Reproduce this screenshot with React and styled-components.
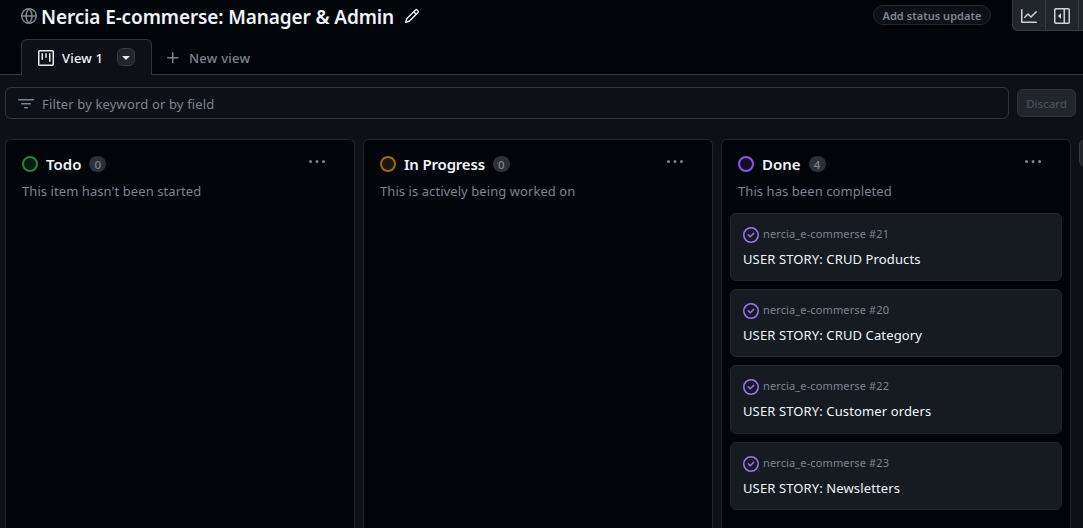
import React from "react";
import styled, { createGlobalStyle } from "styled-components";

const GlobalStyle = createGlobalStyle`
  * { box-sizing: border-box; }
  body {
    margin: 0;
    overflow: hidden;
    background: #0d1117;
    color: #f0f6fc;
    font-family: "Noto Sans", "Open Sans", sans-serif;
    font-size: 13px;
  }
  button { font-family: inherit; margin: 0; padding: 0; border: 0; background: none; color: inherit; }
  h1, h2, h3, p { margin: 0; }
`;

const paths = {
  globe:
    "M8 0a8 8 0 1 1 0 16A8 8 0 0 1 8 0ZM5.78 8.75a9.64 9.64 0 0 0 1.363 4.177c.255.426.542.832.857 1.215.245-.296.551-.705.857-1.215A9.64 9.64 0 0 0 10.22 8.75Zm4.44-1.5a9.64 9.64 0 0 0-1.363-4.177c-.307-.51-.612-.919-.857-1.215a9.927 9.927 0 0 0-.857 1.215A9.64 9.64 0 0 0 5.78 7.25Zm-5.944 1.5H1.543a6.507 6.507 0 0 0 4.666 5.5c-.123-.181-.24-.365-.352-.552-.715-1.192-1.437-2.874-1.581-4.948Zm-2.733-1.5h2.733c.144-2.074.866-3.756 1.58-4.948.12-.197.237-.381.353-.552a6.507 6.507 0 0 0-4.666 5.5Zm10.181 1.5c-.144 2.074-.866 3.756-1.58 4.948-.12.197-.237.381-.353.552a6.507 6.507 0 0 0 4.666-5.5Zm2.733-1.5a6.507 6.507 0 0 0-4.666-5.5c.123.181.24.365.353.552.714 1.192 1.436 2.874 1.58 4.948Z",
  pencil:
    "M11.013 1.427a1.75 1.75 0 0 1 2.474 0l1.086 1.086a1.75 1.75 0 0 1 0 2.474l-8.61 8.61c-.21.21-.47.364-.756.445l-3.251.93a.75.75 0 0 1-.927-.928l.929-3.25c.081-.286.235-.547.445-.758l8.61-8.61Zm.176 4.823L9.75 4.81l-6.286 6.287a.253.253 0 0 0-.064.108l-.558 1.953 1.953-.558a.253.253 0 0 0 .108-.064Zm1.238-3.763a.25.25 0 0 0-.354 0L10.811 3.75l1.439 1.44 1.263-1.263a.25.25 0 0 0 0-.354Z",
  project:
    "M1.75 0h12.5C15.216 0 16 .784 16 1.75v12.5A1.75 1.75 0 0 1 14.25 16H1.75A1.75 1.75 0 0 1 0 14.25V1.75C0 .784.784 0 1.75 0ZM1.5 1.75v12.5c0 .138.112.25.25.25h12.5a.25.25 0 0 0 .25-.25V1.75a.25.25 0 0 0-.25-.25H1.75a.25.25 0 0 0-.25.25ZM11.75 3a.75.75 0 0 1 .75.75v7.5a.75.75 0 0 1-1.5 0v-7.5a.75.75 0 0 1 .75-.75Zm-8.25.75a.75.75 0 0 1 1.5 0v5.5a.75.75 0 0 1-1.5 0ZM8 3a.75.75 0 0 1 .75.75v3.5a.75.75 0 0 1-1.5 0v-3.5A.75.75 0 0 1 8 3Z",
  triangle:
    "m4.427 7.427 3.396 3.396a.25.25 0 0 0 .354 0l3.396-3.396A.25.25 0 0 0 11.396 7H4.604a.25.25 0 0 0-.177.427Z",
  plus:
    "M7.75 2a.75.75 0 0 1 .75.75V7h4.25a.75.75 0 0 1 0 1.5H8.5v4.25a.75.75 0 0 1-1.5 0V8.5H2.75a.75.75 0 0 1 0-1.5H7V2.75A.75.75 0 0 1 7.75 2Z",
  filter:
    "M.75 3h14.5a.75.75 0 0 1 0 1.5H.75a.75.75 0 0 1 0-1.5ZM3 7.75A.75.75 0 0 1 3.75 7h8.5a.75.75 0 0 1 0 1.5h-8.5A.75.75 0 0 1 3 7.75Zm3 4a.75.75 0 0 1 .75-.75h2.5a.75.75 0 0 1 0 1.5h-2.5a.75.75 0 0 1-.75-.75Z",
  graph:
    "M1.5 1.75V13.5h13.75a.75.75 0 0 1 0 1.5H.75a.75.75 0 0 1-.75-.75V1.75a.75.75 0 0 1 1.5 0Zm14.28 2.53-5.25 5.25a.75.75 0 0 1-1.06 0L7 7.06 4.28 9.78a.751.751 0 0 1-1.042-.018.751.751 0 0 1-.018-1.042l3.25-3.25a.75.75 0 0 1 1.06 0L10 7.94l4.72-4.72a.751.751 0 0 1 1.042.018.751.751 0 0 1 .018 1.042Z",
  sidebar:
    "m4.177 7.823 2.396-2.396A.25.25 0 0 1 7 5.604v4.792a.25.25 0 0 1-.427.177L4.177 8.177a.25.25 0 0 1 0-.354ZM0 1.75C0 .784.784 0 1.75 0h12.5C15.216 0 16 .784 16 1.75v12.5A1.75 1.75 0 0 1 14.25 16H1.75A1.75 1.75 0 0 1 0 14.25Zm1.75-.25a.25.25 0 0 0-.25.25v12.5c0 .138.112.25.25.25H9.5v-13Zm12.5 13a.25.25 0 0 0 .25-.25V1.75a.25.25 0 0 0-.25-.25H11v13Z",
  kebab:
    "M8 9a1.5 1.5 0 1 0 0-3 1.5 1.5 0 0 0 0 3ZM1.5 9a1.5 1.5 0 1 0 0-3 1.5 1.5 0 0 0 0 3Zm13 0a1.5 1.5 0 1 0 0-3 1.5 1.5 0 0 0 0 3Z",
  closed:
    "M11.28 6.78a.75.75 0 0 0-1.06-1.06L7.25 8.69 5.78 7.22a.75.75 0 0 0-1.06 1.06l2 2a.75.75 0 0 0 1.06 0l3.5-3.5ZM16 8A8 8 0 1 1 0 8a8 8 0 0 1 16 0Zm-1.5 0a6.5 6.5 0 1 0-13 0 6.5 6.5 0 0 0 13 0Z",
};

const Svg = styled.svg`
  display: block;
  flex: none;
  fill: ${(p) => p.$color || "#7d8590"};
`;

const Icon = ({ name, color, size = 16 }) => (
  <Svg $color={color} width={size} height={size} viewBox="0 0 16 16" fillRule="evenodd">
    <path d={paths[name]} />
  </Svg>
);

const Page = styled.div`
  display: flex;
  flex-direction: column;
  width: 1083px;
  height: 528px;
  overflow: hidden;
  background: #0d1117;
`;

const Header = styled.header`
  display: flex;
  align-items: flex-start;
  height: 39px;
  flex: none;
  padding-left: 21px;
  background: #010409;
`;

const TitleRow = styled.div`
  display: flex;
  align-items: center;
  flex: 1;
  height: 32px;
`;

const Title = styled.h1`
  width: 354px;
  margin: 1px 9px 0 4px;
  font-size: 19px;
  line-height: 28px;
  font-weight: 600;
  letter-spacing: -0.12px;
  white-space: nowrap;
`;

const StatusButton = styled.button`
  width: 118px;
  height: 20px;
  margin: 5px 21px 0 0;
  border: 1px solid #24292f;
  border-radius: 10px;
  background: #0d1117;
  color: #7d8590;
  font-size: 11px;
  line-height: 19px;
  font-weight: 600;
  letter-spacing: 0.05px;
  white-space: nowrap;
`;

const ButtonGroup = styled.div`
  display: flex;
  width: 71px;
  height: 31px;
  overflow: hidden;
  border: 1px solid #363b42;
  border-width: 0 0 1px 1px;
  border-radius: 0 0 0 6px;
  background: #21262d;
`;

const GroupButton = styled.button`
  display: flex;
  flex: none;
  align-items: center;
  justify-content: center;
  width: 33px;
  height: 31px;
  border-right: 1px solid #363b42;
`;

const Tabs = styled.nav`
  display: flex;
  height: 36px;
  flex: none;
  padding-left: 21px;
  background: #010409;
  box-shadow: inset 0 -1px #30363d;
`;

const Tab = styled.div`
  display: flex;
  align-items: center;
  width: 131px;
  height: 36px;
  padding-left: 16px;
  border: 1px solid #30363d;
  border-bottom: 0;
  border-radius: 6px 6px 0 0;
  background: #0d1117;

  > svg { margin-top: 1px; }
`;

const TabLabel = styled.span`
  width: 47px;
  margin-left: 8px;
  line-height: 20px;
  font-weight: 500;
  letter-spacing: 0.2px;
  white-space: nowrap;
`;

const TabMenu = styled.button`
  display: flex;
  align-items: center;
  justify-content: center;
  width: 18px;
  height: 18px;
  margin: -1px 0 0 8px;
  border: 1px solid #363b42;
  border-radius: 6px;
  background: #21262d;
`;

const NewView = styled.button`
  display: flex;
  align-items: center;
  gap: 8px;
  height: 38px;
  padding-left: 13px;
  color: #7d8590;
  font-size: 13px;
  line-height: 20px;
  font-weight: 500;
  letter-spacing: 0.25px;
`;

const FilterBar = styled.div`
  display: flex;
  align-items: center;
  gap: 8px;
  flex: none;
  padding: 12px 7px 0 5px;
`;

const FilterInput = styled.div`
  display: flex;
  align-items: center;
  gap: 8px;
  flex: 1;
  height: 32px;
  padding: 2px 12px 0;
  border: 1px solid #30363d;
  border-radius: 6px;
  color: #7d8590;
  line-height: 20px;
  letter-spacing: 0.15px;
`;

const Discard = styled.button`
  width: 59px;
  height: 28px;
  border: 1px solid #30363d;
  border-radius: 6px;
  background: #21262d;
  color: #484f58;
  font-size: 11.5px;
  font-weight: 500;
  letter-spacing: -0.1px;
`;

const Board = styled.main`
  display: flex;
  flex: 1;
  gap: 8px;
  min-height: 0;
  padding: 20px 0 0 5px;
`;

const Column = styled.section`
  flex: none;
  width: 350px;
  padding: 0 8px;
  border: 1px solid #21262d;
  border-bottom: 0;
  border-radius: 6px 6px 0 0;
  background: #010409;
`;

const ColumnHead = styled.div`
  display: flex;
  align-items: center;
  height: 20px;
  margin: 14px 21px 0 8px;
`;

const StatusRing = styled.span`
  width: 16px;
  height: 16px;
  border: 2px solid ${(p) => p.$ring};
  border-radius: 50%;
  background: ${(p) => p.$fill};
`;

const ColumnTitle = styled.h2`
  margin-left: 8px;
  font-size: 15px;
  line-height: 20px;
  font-weight: 600;
  letter-spacing: ${(p) => p.$tracking};
`;

const Count = styled.span`
  min-width: 17px;
  height: 16px;
  margin-left: 8px;
  padding: 0 5px;
  border-radius: 8px;
  background: #2c3139;
  color: #7d8590;
  font-size: 11.5px;
  line-height: 17px;
  font-weight: 500;
  text-align: center;
`;

const Menu = styled.button`
  margin: -5px 0 0 auto;
`;

const Description = styled.p`
  margin: 7px 8px 0;
  color: #7d8590;
  line-height: 20px;
  letter-spacing: 0.07px;
`;

const Cards = styled.div`
  display: flex;
  flex-direction: column;
  gap: 8px;
  margin-top: 12px;
`;

const Card = styled.article`
  height: 68.2px;
  padding: 11px 12px;
  border: 1px solid #21262d;
  border-radius: 6px;
  background: #161b22;
`;

const CardMeta = styled.div`
  display: flex;
  align-items: center;
  gap: 4px;
  height: 20px;
  color: #7d8590;
  font-size: 11px;
  letter-spacing: 0.12px;
`;

const Reference = styled.span`
  margin-bottom: 3px;
`;

const CardTitle = styled.h3`
  margin-top: 4px;
  font-size: 13px;
  line-height: 20px;
  font-weight: 400;
  letter-spacing: 0.12px;
`;

const AddColumn = styled.button`
  flex: none;
  width: 28px;
  height: 28px;
  border: 1px solid #363b42;
  border-radius: 6px;
  background: #21262d;
`;

const columns = [
  { title: "Todo", tracking: "0", count: 0, text: "This item hasn't been started", ring: "#238636", fill: "#08190f", cards: [] },
  { title: "In Progress", tracking: "-0.18px", count: 0, text: "This is actively being worked on", ring: "#9e6a03", fill: "#1b1509", cards: [] },
  {
    title: "Done", tracking: "0", count: 4, text: "This has been completed", ring: "#8957e5", fill: "#150f24",
    cards: [
      [21, "CRUD Products"],
      [20, "CRUD Category"],
      [22, "Customer orders"],
      [23, "Newsletters"],
    ],
  },
];

export default function App() {
  return (
    <Page>
      <GlobalStyle />
      <Header>
        <TitleRow>
          <Icon name="globe" />
          <Title>Nercia E-commerse: Manager &amp; Admin</Title>
          <Icon name="pencil" color="#e6edf3" />
        </TitleRow>
        <StatusButton>Add status update</StatusButton>
        <ButtonGroup>
          <GroupButton><Icon name="graph" color="#c9d1d9" /></GroupButton>
          <GroupButton><Icon name="sidebar" color="#c9d1d9" /></GroupButton>
        </ButtonGroup>
      </Header>
      <Tabs>
        <Tab>
          <Icon name="project" color="#e6edf3" />
          <TabLabel>View 1</TabLabel>
          <TabMenu><Icon name="triangle" color="#e6edf3" /></TabMenu>
        </Tab>
        <NewView><Icon name="plus" />New view</NewView>
      </Tabs>
      <FilterBar>
        <FilterInput><Icon name="filter" />Filter by keyword or by field</FilterInput>
        <Discard>Discard</Discard>
      </FilterBar>
      <Board>
        {columns.map((c) => (
          <Column key={c.title}>
            <ColumnHead>
              <StatusRing $ring={c.ring} $fill={c.fill} />
              <ColumnTitle $tracking={c.tracking}>{c.title}</ColumnTitle>
              <Count>{c.count}</Count>
              <Menu><Icon name="kebab" /></Menu>
            </ColumnHead>
            <Description>{c.text}</Description>
            <Cards>
              {c.cards.map(([id, name]) => (
                <Card key={id}>
                  <CardMeta>
                    <Icon name="closed" color="#a371f7" />
                    <Reference>nercia_e-commerse #{id}</Reference>
                  </CardMeta>
                  <CardTitle>USER STORY: {name}</CardTitle>
                </Card>
              ))}
            </Cards>
          </Column>
        ))}
        <AddColumn aria-label="Add column" />
      </Board>
    </Page>
  );
}
